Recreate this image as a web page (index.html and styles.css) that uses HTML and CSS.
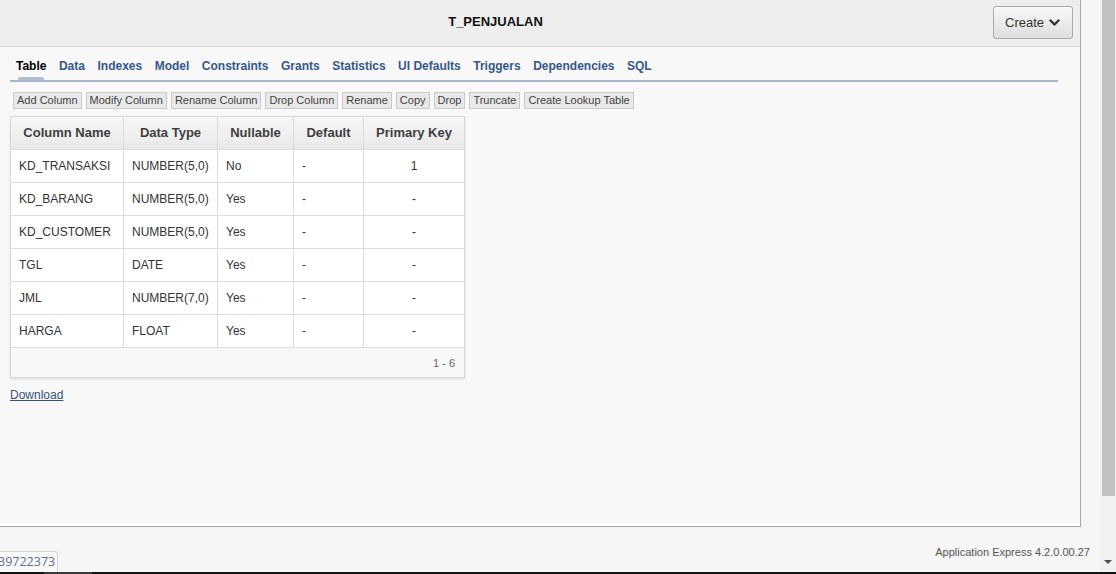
FILE: index.html
```html
<!DOCTYPE html>
<html lang="en">
<head>
<meta charset="utf-8">
<title>T_PENJUALAN</title>
<link rel="stylesheet" href="styles.css">
</head>
<body>
<div class="screen">
  <div class="viewport">
    <div class="page">
      <div class="panel">
        <div class="hd">
          <h1 class="title">T_PENJUALAN</h1>
          <button class="create" type="button">Create
            <svg class="chev" width="11" height="8" viewBox="0 0 11 8"><polyline points="1.5,1.5 5.5,5.5 9.5,1.5" fill="none" stroke="#333" stroke-width="2.4" stroke-linecap="round" stroke-linejoin="round"/></svg>
          </button>
        </div>
        <div class="content">
          <nav class="tabs">
            <a class="tab active"><span>Table</span><i class="bar"></i></a>
            <a class="tab"><span>Data</span></a>
            <a class="tab"><span>Indexes</span></a>
            <a class="tab"><span>Model</span></a>
            <a class="tab"><span>Constraints</span></a>
            <a class="tab"><span>Grants</span></a>
            <a class="tab"><span>Statistics</span></a>
            <a class="tab"><span>UI Defaults</span></a>
            <a class="tab"><span>Triggers</span></a>
            <a class="tab"><span>Dependencies</span></a>
            <a class="tab"><span>SQL</span></a>
          </nav>
          <div class="actions">
            <button class="btn" type="button">Add Column</button>
            <button class="btn" type="button">Modify Column</button>
            <button class="btn" type="button">Rename Column</button>
            <button class="btn" type="button">Drop Column</button>
            <button class="btn" type="button">Rename</button>
            <button class="btn" type="button">Copy</button>
            <button class="btn" type="button">Drop</button>
            <button class="btn" type="button">Truncate</button>
            <button class="btn" type="button">Create Lookup Table</button>
          </div>
          <div class="report">
            <table class="grid">
              <colgroup>
                <col class="c1"><col class="c2"><col class="c3"><col class="c4"><col class="c5">
              </colgroup>
              <thead>
                <tr><th>Column Name</th><th>Data Type</th><th>Nullable</th><th>Default</th><th>Primary Key</th></tr>
              </thead>
              <tbody>
                <tr><td>KD_TRANSAKSI</td><td>NUMBER(5,0)</td><td>No</td><td>-</td><td class="ctr">1</td></tr>
                <tr><td>KD_BARANG</td><td>NUMBER(5,0)</td><td>Yes</td><td>-</td><td class="ctr">-</td></tr>
                <tr><td>KD_CUSTOMER</td><td>NUMBER(5,0)</td><td>Yes</td><td>-</td><td class="ctr">-</td></tr>
                <tr><td>TGL</td><td>DATE</td><td>Yes</td><td>-</td><td class="ctr">-</td></tr>
                <tr><td>JML</td><td>NUMBER(7,0)</td><td>Yes</td><td>-</td><td class="ctr">-</td></tr>
                <tr><td>HARGA</td><td>FLOAT</td><td>Yes</td><td>-</td><td class="ctr">-</td></tr>
              </tbody>
            </table>
            <div class="pager">1 - 6</div>
          </div>
          <a class="download" href="#">Download</a>
        </div>
      </div>
      <div class="foot">Application Express 4.2.0.00.27</div>
    </div>
    <div class="scrollbar">
      <div class="thumb"></div>
      <div class="arrow"></div>
    </div>
  </div>
  <div class="taskbar"><span class="seg"></span></div>
  <div class="tooltip">39722373</div>
</div>
</body>
</html>
```
FILE: styles.css
```css
* { box-sizing: border-box; }
html, body { margin: 0; padding: 0; }
body {
  width: 1116px;
  height: 574px;
  overflow: hidden;
  font-family: "Liberation Sans", Arial, sans-serif;
  color: #333;
  background: #f6f6f6;
}
.screen {
  position: relative;
  display: flex;
  flex-direction: column;
  height: 574px;
}
.viewport {
  display: flex;
  height: 572px;
}
.page {
  width: 1100px;
  display: flex;
  flex-direction: column;
  background: #f6f6f6;
}
.panel {
  width: 1081px;
  height: 527px;
  border-right: 1px solid #a6a6a6;
  border-bottom: 1px solid #a6a6a6;
  background: #f8f8f8;
  box-shadow: inset 0 -2px 0 #fff;
  display: flex;
  flex-direction: column;
}
.hd {
  height: 47px;
  background: #eeeeee;
  border-bottom: 1px solid #d4d4d4;
  display: flex;
  align-items: flex-start;
  padding-right: 7px;
}
.title {
  flex: 1;
  margin: 0;
  text-align: center;
  font-size: 13px;
  font-weight: bold;
  color: #111;
  line-height: 16px;
  padding-top: 14px;
  padding-right: 2px;
}
.create {
  margin-top: 6px;
  width: 80px;
  height: 33px;
  border: 1px solid #ababab;
  border-radius: 3px;
  background: linear-gradient(#f8f8f8, #dedede);
  font-family: "Liberation Sans", Arial, sans-serif;
  font-size: 13px;
  color: #333;
  display: flex;
  align-items: center;
  padding: 0 0 0 11px;
  gap: 5px;
}
.chev { display: block; margin-top: 1px; }
.content {
  padding: 0 22px 0 10px;
}
.tabs {
  display: flex;
  gap: 12.5px;
  padding-left: 6px;
  border-bottom: 2px solid #a7b6c9;
  height: 35px;
}
.tab {
  display: flex;
  flex-direction: column;
  align-items: center;
  padding-top: 12px;
  font-size: 12px;
  font-weight: bold;
  line-height: 14px;
  color: #34578b;
  text-decoration: none;
}
.tab.active { color: #000; }
.bar {
  display: block;
  margin-top: 4px;
  width: 26px;
  height: 3px;
  background: #b1bfd0;
  border-radius: 2px 2px 0 0;
}
.actions {
  display: flex;
  gap: 4px;
  margin-top: 10px;
  padding-left: 3px;
}
.btn {
  height: 17px;
  padding: 0 3px;
  border: 1px solid #cbcbcb;
  background: #e8e8e8;
  font-family: "Liberation Sans", Arial, sans-serif;
  font-size: 11px;
  line-height: 15px;
  color: #444;
  border-radius: 0;
}
.report {
  margin-top: 7px;
  width: 455px;
  border: 1px solid #d9d9d9;
  box-shadow: 0 1px 2px rgba(0,0,0,0.12);
  background: #f8f8f8;
}
.grid {
  border-collapse: separate;
  border-spacing: 0;
  table-layout: fixed;
  width: 453px;
}
.c1 { width: 113px; }
.c2 { width: 94px; }
.c3 { width: 76px; }
.c4 { width: 70px; }
.c5 { width: 100px; }
.grid th, .grid td {
  border-right: 1px solid #dcdcdc;
  border-bottom: 1px solid #dcdcdc;
  white-space: nowrap;
}
.grid th:last-child, .grid td:last-child { border-right: 0; }
.grid th {
  height: 33px;
  padding: 0 0 1px;
  background: linear-gradient(#f6f6f6, #e9e9e9);
  font-size: 13px;
  font-weight: bold;
  color: #404040;
  text-align: center;
}
.grid td {
  height: 33px;
  padding: 0 0 0 8px;
  background: #fff;
  font-size: 12px;
  color: #333;
}
.grid td.ctr { text-align: center; padding: 0; }
.pager {
  height: 29px;
  display: flex;
  align-items: center;
  justify-content: flex-end;
  padding-right: 9px;
  font-size: 11px;
  color: #666;
}
.download {
  display: inline-block;
  margin-top: 10px;
  font-size: 12px;
  line-height: 14px;
  color: #36507a;
}
.foot {
  flex: 1;
  display: flex;
  justify-content: flex-end;
  align-items: center;
  padding: 5px 10px 0 0;
  font-size: 11px;
  color: #555;
}
.scrollbar {
  width: 16px;
  background: #f1f1f1;
  display: flex;
  flex-direction: column;
  align-items: center;
}
.thumb {
  width: 13px;
  height: 496px;
  margin-left: 1px;
  background: #c1c1c1;
}
.arrow {
  margin-top: 64px;
  width: 0;
  height: 0;
  border-left: 4px solid transparent;
  border-right: 4px solid transparent;
  border-top: 4px solid #505050;
}
.taskbar {
  height: 2px;
  background: #111;
  display: flex;
}
.seg {
  margin-left: 44px;
  width: 48px;
  background: #3a3a3a;
}
.tooltip {
  position: absolute;
  left: -3px;
  bottom: 2px;
  height: 21px;
  padding: 0 2px 0 0;
  border: 1px solid #d3d3d3;
  border-bottom: 0;
  border-radius: 0 4px 0 0;
  background: #f8f8f8;
  font-family: "Open Sans", sans-serif;
  font-size: 12.5px;
  line-height: 20px;
  color: #5a6f95;
}
```
